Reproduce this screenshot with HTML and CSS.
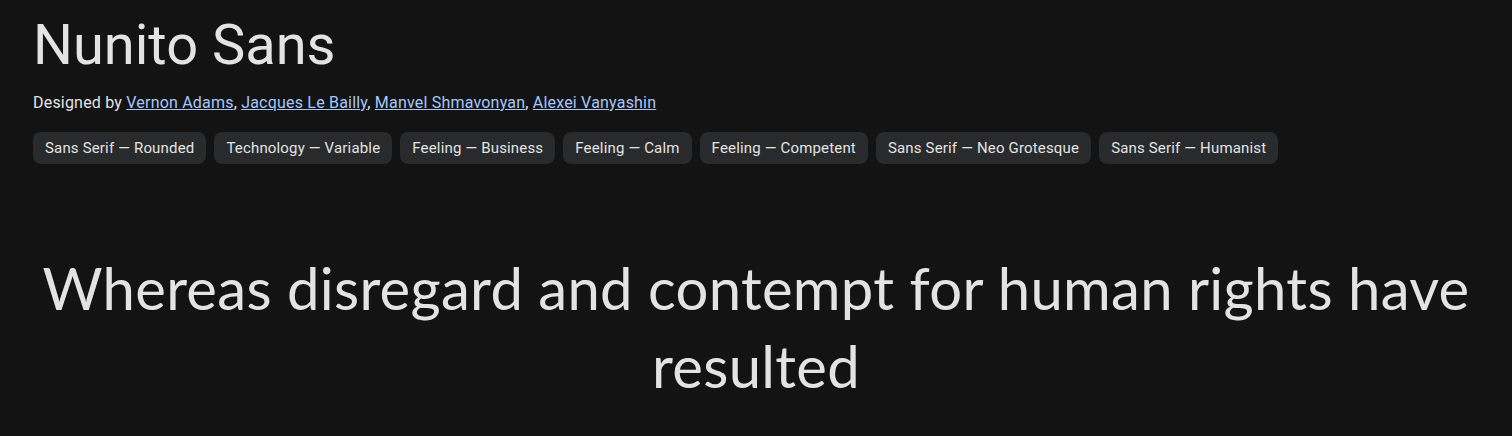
FILE: index.html
```html
<!DOCTYPE html>
<html lang="en">
<head>
<meta charset="utf-8">
<title>Nunito Sans</title>
<link rel="stylesheet" href="styles.css">
</head>
<body>
<header class="family-header">
  <h1 class="family-name">Nunito Sans</h1>
  <p class="designers">Designed by <a href="#">Vernon Adams</a>, <a href="#">Jacques Le Bailly</a>, <a href="#">Manvel Shmavonyan</a>, <a href="#">Alexei Vanyashin</a></p>
  <ul class="tags">
    <li class="tag">Sans Serif — Rounded</li>
    <li class="tag">Technology — Variable</li>
    <li class="tag">Feeling — Business</li>
    <li class="tag">Feeling — Calm</li>
    <li class="tag">Feeling — Competent</li>
    <li class="tag">Sans Serif — Neo Grotesque</li>
    <li class="tag">Sans Serif — Humanist</li>
  </ul>
</header>
<section class="specimen">
  <p class="specimen-text">Whereas disregard and contempt for human rights have resulted</p>
</section>
</body>
</html>
```
FILE: styles.css
```css
html, body {
  margin: 0;
  padding: 0;
  background: #131313;
  color: #e3e3e3;
  font-family: Roboto, "Open Sans", sans-serif;
}

.family-header {
  padding: 0 33px;
}

.family-name {
  margin: 0;
  padding-top: 9px;
  font-size: 56px;
  font-weight: 400;
  line-height: 72px;
  color: #e3e3e3;
}

.designers {
  margin: 12px 0 0;
  font-size: 16px;
  letter-spacing: 0.2px;
  line-height: 20px;
  color: #e3e3e3;
}

.designers a {
  color: #a8c7fa;
}

.tags {
  list-style: none;
  margin: 19px 0 0;
  padding: 0;
  display: flex;
  flex-wrap: wrap;
  gap: 8px;
}

.tag {
  background: #282a2c;
  color: #e3e3e3;
  border-radius: 8px;
  height: 32px;
  line-height: 32px;
  padding: 0 12px;
  font-size: 15px;
  letter-spacing: 0.17px;
}

.specimen {
  padding: 85px 20px 0;
  text-align: center;
}

.specimen-text {
  margin: 0;
  font-family: Lato, "Open Sans", sans-serif;
  font-size: 58px;
  letter-spacing: 0.3px;
  line-height: 78px;
  color: #e3e3e3;
}
```
